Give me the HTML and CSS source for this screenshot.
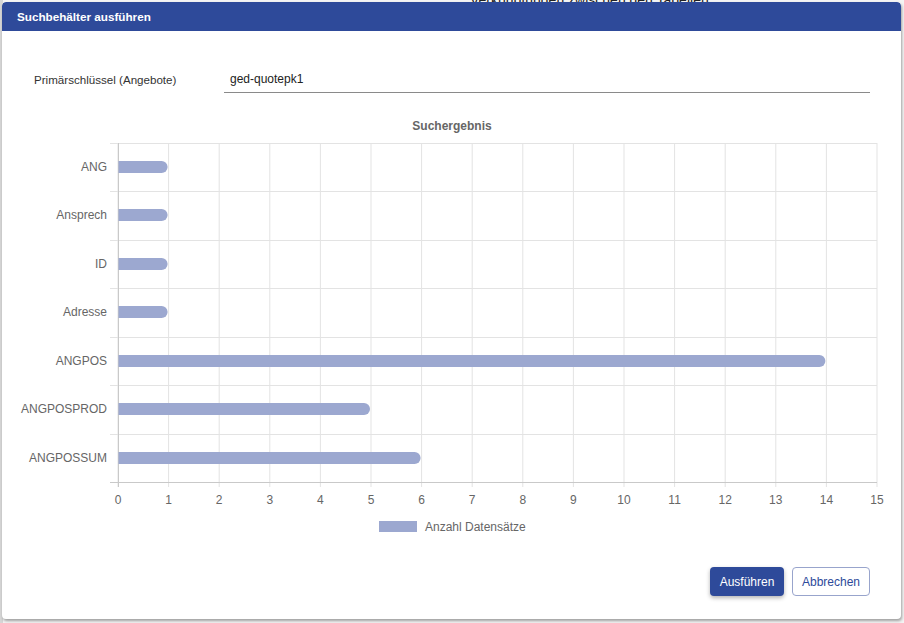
FILE: index.html
```html
<!DOCTYPE html>
<html lang="de">
<head>
<meta charset="utf-8">
<title>Suchbehälter ausführen</title>
<link rel="stylesheet" href="styles.css">
</head>
<body>
<div class="backdrop">
  <div class="bg-strip-left"></div>
  <div class="bg-text">Verknüpfungen zwischen den Tabellen</div>
</div>
<div class="dialog">
  <div class="dialog-header">Suchbehälter ausführen</div>
  <div class="dialog-body">
    <div class="form-row">
      <label class="form-label">Primärschlüssel (Angebote)</label>
      <div class="form-input">ged-quotepk1</div>
    </div>
    <svg class="chart" width="897" height="436" viewBox="0 0 897 436">
      <text class="chart-title" x="450" y="20" text-anchor="middle">Suchergebnis</text>
      <g class="grid">
        <line x1="116" y1="33" x2="116" y2="377"/>
        <line x1="166.6" y1="33" x2="166.6" y2="377"/>
        <line x1="217.2" y1="33" x2="217.2" y2="377"/>
        <line x1="267.8" y1="33" x2="267.8" y2="377"/>
        <line x1="318.4" y1="33" x2="318.4" y2="377"/>
        <line x1="369" y1="33" x2="369" y2="377"/>
        <line x1="419.6" y1="33" x2="419.6" y2="377"/>
        <line x1="470.2" y1="33" x2="470.2" y2="377"/>
        <line x1="520.8" y1="33" x2="520.8" y2="377"/>
        <line x1="571.4" y1="33" x2="571.4" y2="377"/>
        <line x1="622" y1="33" x2="622" y2="377"/>
        <line x1="672.6" y1="33" x2="672.6" y2="377"/>
        <line x1="723.2" y1="33" x2="723.2" y2="377"/>
        <line x1="773.8" y1="33" x2="773.8" y2="377"/>
        <line x1="824.4" y1="33" x2="824.4" y2="377"/>
        <line x1="875" y1="33" x2="875" y2="377"/>
        <line x1="108" y1="33.5" x2="875" y2="33.5"/>
        <line x1="108" y1="81.5" x2="875" y2="81.5"/>
        <line x1="108" y1="130.5" x2="875" y2="130.5"/>
        <line x1="108" y1="178.5" x2="875" y2="178.5"/>
        <line x1="108" y1="227.5" x2="875" y2="227.5"/>
        <line x1="108" y1="275.5" x2="875" y2="275.5"/>
        <line x1="108" y1="324.5" x2="875" y2="324.5"/>
      </g>
      <g class="axis">
        <line x1="116.5" y1="33" x2="116.5" y2="377"/>
        <line x1="108" y1="372.5" x2="875" y2="372.5"/>
      </g>
      <g class="bars">
        <path d="M116.5 51 H159.6 A6 6 0 0 1 159.6 63 H116.5 Z"/>
        <path d="M116.5 99 H159.6 A6 6 0 0 1 159.6 111 H116.5 Z"/>
        <path d="M116.5 148 H159.6 A6 6 0 0 1 159.6 160 H116.5 Z"/>
        <path d="M116.5 196 H159.6 A6 6 0 0 1 159.6 208 H116.5 Z"/>
        <path d="M116.5 245 H817.4 A6 6 0 0 1 817.4 257 H116.5 Z"/>
        <path d="M116.5 293 H362 A6 6 0 0 1 362 305 H116.5 Z"/>
        <path d="M116.5 342 H412.6 A6 6 0 0 1 412.6 354 H116.5 Z"/>
      </g>
      <g class="ylabels" text-anchor="end">
        <text x="105" y="61">ANG</text>
        <text x="105" y="109">Ansprech</text>
        <text x="105" y="158">ID</text>
        <text x="105" y="206">Adresse</text>
        <text x="105" y="255">ANGPOS</text>
        <text x="105" y="303">ANGPOSPROD</text>
        <text x="105" y="352">ANGPOSSUM</text>
      </g>
      <g class="xlabels" text-anchor="middle">
        <text x="116" y="394">0</text>
        <text x="166.6" y="394">1</text>
        <text x="217.2" y="394">2</text>
        <text x="267.8" y="394">3</text>
        <text x="318.4" y="394">4</text>
        <text x="369" y="394">5</text>
        <text x="419.6" y="394">6</text>
        <text x="470.2" y="394">7</text>
        <text x="520.8" y="394">8</text>
        <text x="571.4" y="394">9</text>
        <text x="622" y="394">10</text>
        <text x="672.6" y="394">11</text>
        <text x="723.2" y="394">12</text>
        <text x="773.8" y="394">13</text>
        <text x="824.4" y="394">14</text>
        <text x="875" y="394">15</text>
      </g>
      <rect class="legend-box" x="377" y="411" width="38" height="11"/>
      <text class="legend-text" x="423" y="421">Anzahl Datensätze</text>
    </svg>
  </div>
  <div class="dialog-footer">
    <button class="btn btn-primary">Ausführen</button>
    <button class="btn btn-secondary">Abbrechen</button>
  </div>
</div>
</body>
</html>
```
FILE: styles.css
```css
html, body {
  margin: 0;
  padding: 0;
  width: 904px;
  height: 623px;
  overflow: hidden;
  background: #ffffff;
  font-family: "Liberation Sans", Arial, sans-serif;
}

.backdrop {
  position: absolute;
  inset: 0;
  background: #f4f4f4;
}

.bg-strip-left {
  position: absolute;
  left: 0;
  top: 0;
  width: 3px;
  height: 623px;
  background: #d6d6d6;
}

.bg-text {
  position: absolute;
  left: 470px;
  top: -8px;
  font-size: 14px;
  color: #222;
}

.dialog {
  position: absolute;
  left: 2px;
  top: 2px;
  width: 899px;
  height: 617px;
  background: #ffffff;
  border-radius: 4px;
  box-shadow: 1px 2px 3px rgba(0, 0, 0, 0.35);
  display: flex;
  flex-direction: column;
  overflow: hidden;
}

.dialog-header {
  height: 29px;
  background: #2e4a9a;
  color: #ffffff;
  font-weight: bold;
  font-size: 11.7px;
  line-height: 30px;
  padding-left: 15px;
  border-radius: 4px 4px 0 0;
}

.dialog-body {
  flex: 1;
  display: flex;
  flex-direction: column;
}

.form-row {
  display: flex;
  align-items: flex-end;
  margin-top: 36px;
  padding: 0 31px 0 32px;
  height: 26px;
}

.form-label {
  width: 190px;
  font-size: 11.6px;
  color: #333;
  line-height: 26px;
  align-self: stretch;
}

.form-input {
  flex: 1;
  font-size: 12px;
  color: #222;
  padding-left: 6px;
  line-height: 25px;
  border-bottom: 1px solid #8a8a8a;
}

.chart {
  display: block;
  margin-top: 17px;
  font-family: "Liberation Sans", Arial, sans-serif;
}

.chart-title {
  font-size: 12px;
  font-weight: bold;
  fill: #666666;
}

.grid line {
  stroke: #e3e3e3;
  stroke-width: 1;
}

.axis line {
  stroke: #c9c9c9;
  stroke-width: 1;
}

.bars path {
  fill: #9ca8d0;
}

.ylabels text,
.xlabels text,
.legend-text {
  font-size: 12px;
  fill: #666666;
}

.legend-box {
  fill: #9ca8d0;
}

.dialog-footer {
  display: flex;
  justify-content: flex-end;
  gap: 8px;
  padding: 0 31px 23px 0;
}

.btn {
  height: 29px;
  font-family: "Liberation Sans", Arial, sans-serif;
  font-size: 12px;
  border-radius: 4px;
  cursor: pointer;
  padding: 0;
}

.btn-primary {
  width: 74px;
  background: #2e4a9a;
  color: #ffffff;
  border: none;
  box-shadow: 0 2px 4px rgba(0, 0, 0, 0.3);
}

.btn-secondary {
  width: 78px;
  background: #ffffff;
  color: #2e4a9a;
  border: 1px solid #98a4cc;
}
```
